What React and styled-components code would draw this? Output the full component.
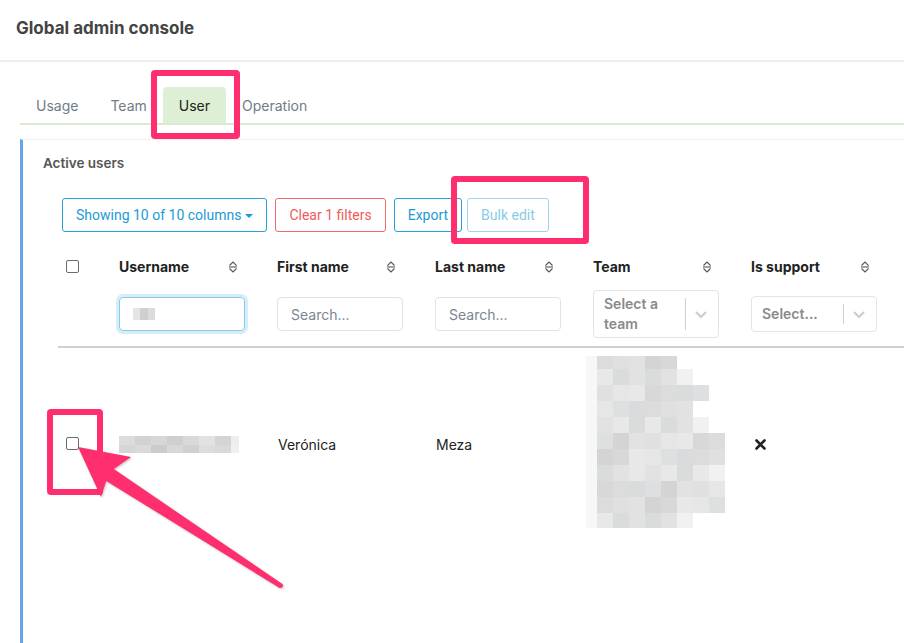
import React from 'react'
import styled, { createGlobalStyle } from 'styled-components'

const GlobalStyle = createGlobalStyle`
  html, body {
    margin: 0;
    padding: 0;
    background: #fff;
    overflow: hidden;
    font-family: Inter, "Noto Sans", sans-serif;
    color: #222;
  }
`

const columns = [
  { key: 'username', label: 'Username' },
  { key: 'first', label: 'First name' },
  { key: 'last', label: 'Last name' },
  { key: 'team', label: 'Team' },
  { key: 'support', label: 'Is support' },
]

const shades = ['#dcdcdd', '#e2e2e3', '#d8d8d9', '#e6e6e7', '#dadbdc', '#e0e0e1', '#d4d4d5', '#e8e8e9', '#dedfe0']

// how many 16px blocks each row of the team blur has
const teamRows = [5, 6, 7, 6, 7, 8, 8, 8, 8, 8, 6]

function shade(i, j) {
  return shades[(i * 7 + j * 5 + ((i * j) % 3)) % shades.length]
}

const TeamBlur = () => (
  <svg width="141" height="172" viewBox="0 0 141 172">
    {teamRows.map((len, i) => {
      const y = i === 0 ? 0 : 13 + (i - 1) * 16
      const h = i === 0 ? 13 : 16
      return (
        <g key={i}>
          <rect x="0" y={y} width="11" height={h} fill="#f7f7f7" />
          {Array.from({ length: len }).map((_, j) => (
            <rect key={j} x={11 + j * 16} y={y} width="16" height={h}
              fill={j === len - 1 && i % 3 === 1 ? '#f1f1f2' : shade(i, j)} />
          ))}
        </g>
      )
    })}
  </svg>
)

const NameBlur = () => (
  <svg width="120" height="17" viewBox="0 0 120 17">
    {Array.from({ length: 8 }).map((_, j) => (
      <g key={j}>
        <rect x={j * 16} y="0" width="16" height="9" fill={['#dcdcdc', '#d2d2d2', '#d7d7d7', '#cfcfcf', '#d9d9d9', '#e2e2e2', '#d4d4d4', '#eeeeee'][j]} />
        <rect x={j * 16} y="9" width="16" height="8" fill={['#d6d6d6', '#dadada', '#cccccc', '#d8d8d8', '#d0d0d0', '#dddddd', '#d9d9d9', '#f0f0f0'][j]} />
      </g>
    ))}
  </svg>
)

const InputBlur = () => (
  <svg width="22" height="12" viewBox="0 0 22 12">
    <rect x="0" y="0" width="7" height="12" fill="#e4e4e4" />
    <rect x="7" y="0" width="8" height="12" fill="#cfcfcf" />
    <rect x="15" y="0" width="7" height="12" fill="#dcdcdc" />
  </svg>
)

const SortIcon = () => (
  <svg width="10" height="12" viewBox="0 0 10 12">
    <path d="M1.5 4.5 L5 1 L8.5 4.5" fill="none" stroke="#555" strokeWidth="1.1" />
    <path d="M1 6 H9" stroke="#555" strokeWidth="1.1" />
    <path d="M1.5 7.5 L5 11 L8.5 7.5" fill="none" stroke="#555" strokeWidth="1.1" />
  </svg>
)

const Chevron = () => (
  <svg width="14" height="10" viewBox="0 0 14 10">
    <path d="M2 3 L7 8 L12 3" fill="none" stroke="#cccccc" strokeWidth="2" />
  </svg>
)

const Cross = () => (
  <svg width="11" height="11" viewBox="0 0 11 11">
    <path d="M1.5 1.5 L9.5 9.5 M9.5 1.5 L1.5 9.5" stroke="#222" strokeWidth="2.6" strokeLinecap="round" />
  </svg>
)

const App = () => {
  return (
    <Page>
      <GlobalStyle />
      <Header>Global admin console</Header>
      <Tabs>
        <Tab>Usage</Tab>
        <Tab>Team</Tab>
        <Tab active>User</Tab>
        <Tab>Operation</Tab>
      </Tabs>
      <Card>
        <CardTitle>Active users</CardTitle>
        <Toolbar>
          <ToolButton tone="blue">Showing 10 of 10 columns <Caret /></ToolButton>
          <ToolButton tone="red">Clear 1 filters</ToolButton>
          <ToolButton tone="blue">Export</ToolButton>
          <ToolButton tone="disabled" tight>Bulk edit</ToolButton>
        </Toolbar>
        <Table>
          <HeadRow>
            <CheckCell><Checkbox /></CheckCell>
            {columns.map(c => (
              <HeadCell key={c.key}>
                <span>{c.label}</span>
                <SortIcon />
              </HeadCell>
            ))}
          </HeadRow>
          <FilterRow>
            <div />
            <FilterCell>
              <TextInput focused><InputBlur /></TextInput>
            </FilterCell>
            <FilterCell><TextInput>Search...</TextInput></FilterCell>
            <FilterCell><TextInput>Search...</TextInput></FilterCell>
            <FilterCell>
              <SelectBox>
                <SelectText>Select a team</SelectText>
                <Separator />
                <Chevron />
              </SelectBox>
            </FilterCell>
            <FilterCell>
              <SelectBox>
                <SelectText>Select...</SelectText>
                <Separator />
                <Chevron />
              </SelectBox>
            </FilterCell>
          </FilterRow>
          <DataRow>
            <CheckCell lower><Checkbox /></CheckCell>
            <BodyCell lower><NameBlur /></BodyCell>
            <BodyCell lower shift={1}>Verónica</BodyCell>
            <BodyCell lower shift={1}>Meza</BodyCell>
            <BodyCell shift={-7}><TeamBlur /></BodyCell>
            <BodyCell lower shift={4}><Cross /></BodyCell>
          </DataRow>
        </Table>
      </Card>

      <Highlight style={{ left: 151, top: 70, width: 89, height: 69 }} />
      <Highlight style={{ left: 451, top: 176, width: 138, height: 68 }} />
      <Highlight style={{ left: 47, top: 409, width: 56, height: 86 }} />
      <ArrowLayer width="904" height="643" viewBox="0 0 904 643">
        <path
          d="M78 447 L131 457 L113.8 469.1 L282.4 583.9 Q284.5 587.5 279.6 588.1 L106.2 480.9 L101 497 Z"
          fill="#ff2e6f"
        />
      </ArrowLayer>
    </Page>
  )
}

const Page = styled.div`
  position: relative;
  width: 904px;
  height: 643px;
  overflow: hidden;
`

const Header = styled.div`
  display: flex;
  align-items: center;
  padding: 0 16px 4px;
  border-bottom: 2px solid #eeeeee;
  font-size: 17px;
  font-weight: 700;
  color: #444;
  box-sizing: border-box;
  height: 62px;
`

const Tabs = styled.div`
  display: flex;
  margin: 25px 0 0 20px;
  border-bottom: 2px solid #d9ebcf;
`

const Tab = styled.div`
  height: 36px;
  padding: 0 16px;
  display: flex;
  align-items: center;
  font-size: 14px;
  color: ${p => (p.active ? '#222' : '#6f7c8a')};
  background: ${p => (p.active ? '#ddefd5' : 'transparent')};
  border-radius: 4px 4px 0 0;
`

const Card = styled.div`
  margin: 14px 0 0 20px;
  border-left: 3px solid #62a8e5;
  border-top: 1px solid #f0f0f0;
  padding: 15px 0 0 20px;
  height: 600px;
`

const CardTitle = styled.div`
  font-size: 13.5px;
  font-weight: 600;
  color: #555;
  line-height: 16px;
`

const Toolbar = styled.div`
  display: flex;
  margin: 27px 0 0 19px;
`

const tones = {
  blue: { color: '#1e9ad3', border: '#2aa0d8' },
  red: { color: '#ee5b5a', border: '#ef6b6a' },
  disabled: { color: '#86cbe8', border: '#9fd6ee' },
}

const ToolButton = styled.div`
  height: 34px;
  box-sizing: border-box;
  padding: 0 13px;
  margin-left: ${p => (p.tight ? '5px' : '0')};
  margin-right: 8px;
  display: flex;
  align-items: center;
  gap: 4px;
  border: 1px solid ${p => tones[p.tone].border};
  color: ${p => tones[p.tone].color};
  border-radius: 3px;
  font-family: Roboto, "Liberation Sans", sans-serif;
  font-size: 14px;
  white-space: nowrap;
  &:nth-child(3) { margin-right: 0; }
`

const Caret = styled.span`
  display: inline-block;
  width: 0;
  height: 0;
  border-left: 4px solid transparent;
  border-right: 4px solid transparent;
  border-top: 4px solid currentColor;
  margin-top: 1px;
`

const Table = styled.div`
  margin: 19px 0 0 15px;
  width: 900px;
`

const grid = `
  display: grid;
  grid-template-columns: 53px repeat(5, 158px) 100px;
`

const HeadRow = styled.div`
  ${grid}
  height: 31px;
  align-items: center;
`

const CheckCell = styled.div`
  padding-left: 8px;
  padding-top: ${p => (p.lower ? '4px' : '0')};
  display: flex;
  align-items: center;
`

const Checkbox = styled.div`
  width: 11px;
  height: 11px;
  border: 1px solid #6b6b6b;
  border-radius: 2px;
  margin-top: -1px;
`

const HeadCell = styled.div`
  display: flex;
  align-items: center;
  justify-content: space-between;
  padding: 0 31px 0 8px;
  font-size: 14px;
  font-weight: 700;
  color: #222;
`

const FilterRow = styled.div`
  ${grid}
  height: 64px;
  align-items: center;
  border-bottom: 2px solid #ccd1d7;
`

const FilterCell = styled.div`
  padding-left: 8px;
`

const TextInput = styled.div`
  width: 126px;
  height: 34px;
  box-sizing: border-box;
  display: flex;
  align-items: center;
  padding: 0 13px;
  border: 1px solid ${p => (p.focused ? '#86cbea' : '#dfe2e6')};
  box-shadow: ${p => (p.focused ? '0 0 0 3px rgba(134, 203, 234, 0.35)' : 'none')};
  border-radius: 4px;
  font-size: 14px;
  color: #7b8592;
`

const SelectBox = styled.div`
  width: 126px;
  min-height: 36px;
  box-sizing: border-box;
  display: flex;
  align-items: center;
  border: 1px solid #e3e4e6;
  border-radius: 4px;
  padding: 3px 10px 3px 10px;
`

const SelectText = styled.div`
  flex: 1;
  font-size: 14px;
  font-weight: 600;
  line-height: 20px;
  color: #8a8a8a;
  white-space: normal;
`

const Separator = styled.div`
  width: 1px;
  align-self: stretch;
  margin: 4px 8px 4px 6px;
  background: #d0d0d0;
`

const DataRow = styled.div`
  ${grid}
  padding: 8px 0 8px;
  align-items: center;
`

const BodyCell = styled.div`
  padding-left: ${p => 8 + (p.shift || 0)}px;
  padding-top: ${p => (p.lower ? '4px' : '0')};
  font-size: 14px;
  color: #222;
  display: flex;
  align-items: center;
`

const Highlight = styled.div`
  position: absolute;
  box-sizing: border-box;
  border: 6px solid #ff2e6f;
  border-radius: 4px;
  pointer-events: none;
`

const ArrowLayer = styled.svg`
  position: absolute;
  left: 0;
  top: 0;
  pointer-events: none;
  filter: drop-shadow(1px 1px 1px rgba(0, 0, 0, 0.25));
`

export default App
